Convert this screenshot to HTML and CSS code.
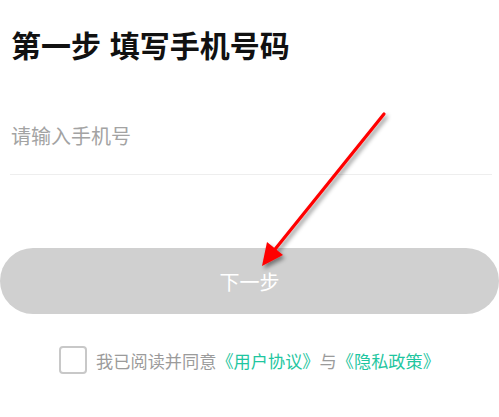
FILE: index.html
```html
<!DOCTYPE html>
<html lang="zh-CN">
<head>
  <meta charset="UTF-8">
  <meta name="viewport" content="width=device-width, initial-scale=1">
  <title>填写手机号码</title>
  <link rel="stylesheet" href="styles.css">
</head>
<body>
  <div class="page">
    <h1 class="title">第一步 填写手机号码</h1>
    <div class="field">
      <input type="tel" class="phone" placeholder="请输入手机号">
    </div>
    <button class="next">下一步</button>
    <label class="agree">
      <span class="check"></span>
      <span class="agree-text">我已阅读并同意<a href="#">《用户协议》</a>与<a href="#">《隐私政策》</a></span>
    </label>

    <svg class="arrow" width="499" height="417" viewBox="0 0 499 417">
      <defs>
        <filter id="shadow" x="-20%" y="-20%" width="140%" height="140%">
          <feDropShadow dx="2" dy="3" stdDeviation="2" flood-color="#000" flood-opacity="0.45"/>
        </filter>
      </defs>
      <g filter="url(#shadow)">
        <line x1="384" y1="114" x2="272" y2="253" stroke="#ff0000" stroke-width="3.2" stroke-linecap="round"/>
        <polygon points="262,266 267,242 283,255" fill="#ff0000"/>
      </g>
    </svg>
  </div>
</body>
</html>
```

FILE: styles.css
```css
body {
  margin: 0;
  background: #fff;
  font-family: "Noto Sans CJK SC", "Noto Sans", sans-serif;
}
.page {
  position: relative;
  width: 499px;
  height: 417px;
  overflow: hidden;
}
.title {
  margin: 0;
  padding: 23px 0 0 11px;
  font-size: 30px;
  font-weight: 700;
  line-height: 42px;
  word-spacing: 2px;
  color: #111;
}
.field {
  margin: 42px 7px 0 10px;
  padding-bottom: 11px;
  border-bottom: 1px solid #eeeeee;
}
.phone {
  display: block;
  width: 100%;
  box-sizing: border-box;
  border: none;
  outline: none;
  padding: 0 0 0 1px;
  height: 56px;
  font-family: inherit;
  font-size: 20px;
  color: #333;
  background: transparent;
}
.phone::placeholder {
  color: #a3a3a3;
}
.next {
  display: block;
  width: 100%;
  height: 66px;
  margin-top: 73px;
  border: none;
  border-radius: 33px;
  background: #d0d0d0;
  color: #fff;
  font-family: inherit;
  font-size: 20px;
}
.agree {
  display: flex;
  align-items: center;
  justify-content: center;
  gap: 9px;
  margin-top: 32px;
}
.check {
  width: 24px;
  height: 24px;
  border: 2px solid #c8c8c8;
  border-radius: 4px;
}
.agree-text {
  font-size: 17.2px;
  color: #9b9b9b;
}
.agree-text a {
  color: #1fc6a0;
  text-decoration: none;
}
.arrow {
  position: absolute;
  left: 0;
  top: 0;
  pointer-events: none;
}
```
